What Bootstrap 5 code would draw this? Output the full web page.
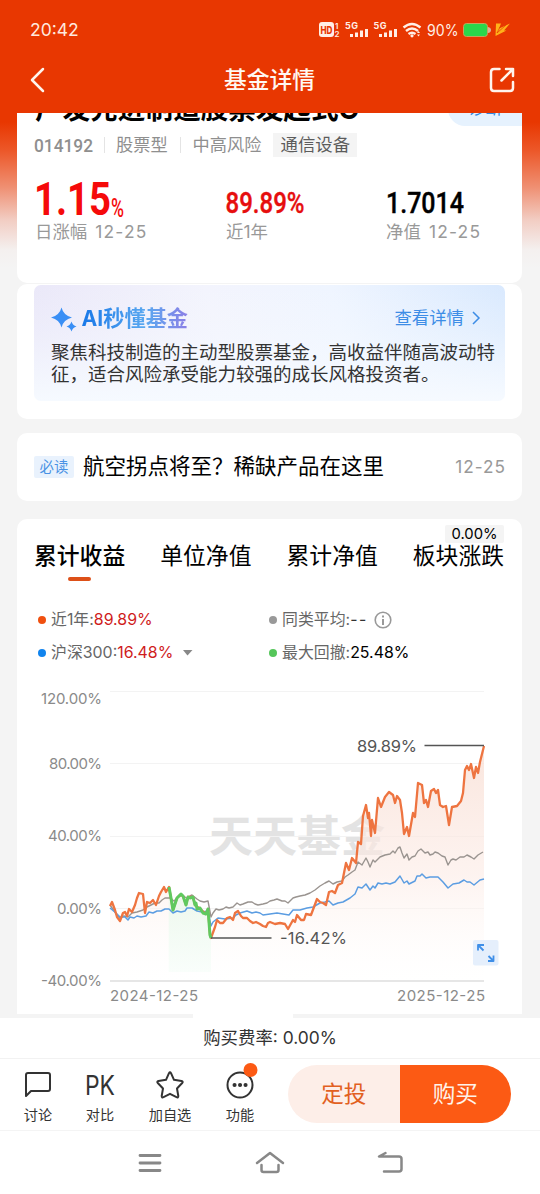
<!DOCTYPE html>
<html lang="zh-CN">
<head>
<meta charset="utf-8">
<meta name="viewport" content="width=device-width, initial-scale=1">
<title>基金详情</title>
<link href="https://cdn.jsdelivr.net/npm/bootstrap@5.3.0/dist/css/bootstrap.min.css" rel="stylesheet">
<style>
body{font-family:Inter,"Noto Sans CJK SC",sans-serif;width:540px;height:1194px;overflow:hidden;color:#000;line-height:1;
background:linear-gradient(#e83701 0,#e83701 122px,#ec5728 150px,#ef8f72 187px,#f2cdc3 220px,#f4f0ef 250px,#f4f4f4 268px)}
svg{display:block;flex:none;overflow:visible}
svg text{font-family:Inter,"Noto Sans CJK SC",sans-serif}
svg .din{font-family:Roboto,"Liberation Sans",sans-serif}
.status{height:60px;padding:0 30px;color:#ffe9df;font-size:17.5px}
.topnav{height:53px;padding:0 25px 13px 29px;color:#fff8f2}
.topnav h1{font-size:22.8px;font-weight:500;margin:0 0 0 5px}
.feed{height:905px;padding:0 18px 0 17px}
.panel{background:#fff;border-radius:10px}
.head{height:170px;border-radius:0 0 10px 10px;padding-left:18px}
.fname{font-size:27.6px;font-weight:700;height:32px;line-height:32px;margin-top:-20px;white-space:nowrap}
.diag{width:74px;height:34px;margin-top:-21px;border-radius:17px 0 0 17px;background:#e6f2fe;color:#2f86e0;font-size:17px;line-height:32px;padding-left:20px}
.meta{font-size:17.2px;color:#8f8f8f;margin-top:7px;height:24px}
.meta i{width:1px;height:16px;background:#e4e4e4;margin:0 11px 0 10px}
.meta i+span+i{margin:0 12px}
.tagbox{background:#f4f4f4;color:#5c5c5c;font-size:17.4px;height:24px;width:84px;margin-left:12px}
.sub{font-size:17.4px;color:#999}
.sub span{letter-spacing:1.2px;margin-left:2px}
.ai{height:135px;margin-top:1px;padding:1px 17px 0}
.aibox{height:116px;border-radius:7px;padding:20px 0 0 17px;background:linear-gradient(rgba(246,250,255,0) 0,rgba(246,250,255,.3) 40%,#f6faff 100%),linear-gradient(75deg,#e9e6f8 0,#f3f4fd 40%,#eff5ff 65%,#d9e9fe 100%)}
.aititle{font-size:21.2px;font-weight:700;background:linear-gradient(90deg,#1878e8,#5aa8f0 60%,#8c7fe6);-webkit-background-clip:text;background-clip:text;color:transparent;line-height:26px}
.aitext{font-size:18.5px;line-height:22px;color:#333;white-space:nowrap;margin-top:10px}
.more{color:#3d8de6;font-size:17.4px;margin-right:24px}
.news{height:68px;margin-top:14px;padding:0 17px}
.must{width:40px;height:22px;background:#e9f2fd;color:#4a92e4;font-size:14.4px;border-radius:2px}
.news b{font-weight:400;font-size:21.5px;margin-left:9px}
.news span{font-size:17.2px;color:#999;letter-spacing:1px;margin-right:-1px}
.perf{height:495px;margin-top:18px;border-radius:10px 10px 0 0;padding-top:25px}
.tabs{padding:0 18px 0 17px;font-size:22.8px;height:51px;line-height:24px}
.bar{width:23px;height:4px;border-radius:2px;background:#dd5018;margin:9px auto 0}
.tip{right:0;top:-19px;width:59px;height:18px;background:#f4f4f4;font-size:14.8px;line-height:18px;border-radius:2px}
.legend{padding-left:21px;padding-top:8px;font-size:15.9px;color:#666}
.legend>div{height:33px;width:231px}
.legend u{width:8px;height:8px;border-radius:50%;margin-right:5px}
.legend b{font-weight:400}
.red{color:#cf1c1c}
.fee{height:41px;background:#fff;border-bottom:1px solid #f2f2f2;font-size:17.4px;color:#333;position:relative}
.fee::before{content:"";position:absolute;left:193px;top:-5px;width:100px;height:6px;background:#fff}
.actions{height:72px;background:#fff;border-bottom:1px solid #f4f4f4;font-size:14.2px;color:#333;padding-left:5px}
.act{width:70px;padding-top:12px}
.act:first-child{width:66px}
.act:nth-child(2){width:58px;margin-right:6px}
.act svg{margin-bottom:9px}
.buy{width:223px;height:58px;border-radius:29px;margin:6px 0 0 13px;font-size:22.6px}
.buy div{background:#fdeee8;color:#e2601f}
.buy div+div{background:#fc5a14;color:#fff3e9}
.sys{height:63px;background:#fff;padding:0 137px 0 138px}
</style>
</head>
<body class="d-flex flex-column">
<header>
<div class="status d-flex align-items-center justify-content-between"><span>20:42</span>
<svg width="193" height="24" viewBox="317 18 193 24" fill="#ffeee6">
<rect x="319" y="22" width="15" height="15" rx="3"/><text x="320.5" y="33.5" font-size="10.5" font-weight="800" fill="#e83701" textLength="12" lengthAdjust="spacingAndGlyphs">HD</text>
<text x="335" y="28.5" font-size="8" font-weight="600">1</text><text x="334.500" y="36.500" font-size="8" font-weight="600">2</text>
<text x="345" y="28.500" font-size="9" font-weight="700" textLength="13">5G</text><text x="373.500" y="28.500" font-size="9" font-weight="700" textLength="13">5G</text>
<path d="M350 34h3v3h-3zM355 32.500h3v4.500h-3zM360 30.500h3v6.500h-3zM365 29h3v8h-3z"/><path d="M379 34h3v3h-3zM384 32.500h3v4.500h-3zM389 30.500h3v6.500h-3zM394 29h3v8h-3z"/>
<g fill="none" stroke="#ffeee6" stroke-width="2.400"><path d="M403.500 27.500q8.500-7 17 0M406 31q6-5 12 0M408.500 34q3.500-2.500 7 0"/></g><circle cx="412" cy="35.800" r="1.600"/><path d="M417 33l1.500-2 1.500 2zM417 34.500l1.500 2 1.500-2z"/>
<text x="427" y="36" font-size="15.500" textLength="31.500" lengthAdjust="spacingAndGlyphs">90%</text>
<rect x="463.500" y="23.500" width="24" height="13" rx="3" fill="#2bd74b" stroke="#c5a45c"/><path d="M488 27q3 .5 3 3t-3 3z" fill="#d9b39a"/>
<path d="M496 23.500h5l-2 5 11-5-6 7h2.500l-11 5.500z" fill="#ffb21a"/><path d="M500 27l-3 6 9-8" fill="none" stroke="#e83701" stroke-width=".7"/>
</svg></div>
<div class="topnav d-flex align-items-center justify-content-between">
<svg width="16" height="26" fill="none" stroke="#fff4ec" stroke-width="2.500" stroke-linecap="round" stroke-linejoin="round"><path d="M14 2L3 13l11 11"/></svg>
<h1>基金详情</h1>
<svg width="26" height="26" fill="none" stroke="#fff4ec" stroke-width="2.500" stroke-linecap="round" stroke-linejoin="round"><path d="M10.500 2H5Q2 2 2 5v16q0 3 3 3h16q3 0 3-3v-6M17 2h7v7M24 2L12.500 13.500"/></svg>
</div>
</header>
<main class="feed overflow-hidden">
<section class="panel head overflow-hidden">
<div class="d-flex justify-content-between"><div class="fname">广发先进制造股票发起式C</div><div class="diag">诊断</div></div>
<div class="meta d-flex align-items-center"><svg width="59" height="20"><text class="din" x="-1" y="16.500" font-size="18.500" font-weight="500" fill="#8f8f8f" textLength="59" lengthAdjust="spacingAndGlyphs">014192</text></svg><i></i><span>股票型</span><i></i><span>中高风险</span><span class="tagbox d-flex align-items-center justify-content-center">通信设备</span></div>
<div class="d-flex">
<div style="width:191px"><svg width="100" height="66" viewBox="35 156 100 66"><text class="din" x="34" y="214" font-size="46" font-weight="700" fill="#f50a0a" textLength="77" lengthAdjust="spacingAndGlyphs">1.15</text><text class="din" x="111" y="216" font-size="25" font-weight="500" fill="#f50a0a" textLength="13" lengthAdjust="spacingAndGlyphs">%</text></svg><div class="sub">日涨幅<span> 12-25</span></div></div>
<div style="width:160px"><svg width="100" height="66" viewBox="226 156 100 66"><text class="din" x="225.500" y="212" font-size="29" font-weight="500" stroke="#e60e0e" stroke-width=".4" fill="#e60e0e" textLength="79" lengthAdjust="spacingAndGlyphs">89.89%</text></svg><div class="sub">近1年</div></div>
<div><svg width="100" height="66" viewBox="386 156 100 66"><text class="din" x="386" y="212" font-size="29" font-weight="500" stroke="#000" stroke-width=".4" textLength="78" lengthAdjust="spacingAndGlyphs">1.7014</text></svg><div class="sub">净值<span> 12-25</span></div></div>
</div>
</section>
<section class="panel ai"><div class="aibox">
<div class="d-flex align-items-center"><svg width="30.500" height="26" fill="#3a8ff5"><path d="M10.500 2.500Q12.500 10.500 21 12.500 12.500 14.500 10.500 22.500 8.500 14.500 0 12.500 8.500 10.500 10.500 2.500zM20.500 16.500q1.200 3.800 5 5-3.800 1.200-5 5-1.200-3.800-5-5 3.800-1.200 5-5z"/></svg><span class="aititle">AI秒懂基金</span>
<span class="more ms-auto d-flex align-items-center">查看详情<svg class="ms-2" width="9" height="14" fill="none" stroke="#3d8de6" stroke-width="1.500"><path d="M1 1l6 6-6 6"/></svg></span></div>
<div class="aitext">聚焦科技制造的主动型股票基金，高收益伴随高波动特<br>征，适合风险承受能力较强的成长风格投资者。</div>
</div></section>
<section class="panel news d-flex align-items-center"><div class="must d-flex align-items-center justify-content-center">必读</div><b>航空拐点将至？稀缺产品在这里</b><span class="ms-auto">12-25</span></section>
<section class="panel perf">
<div class="tabs d-flex justify-content-between"><div class="fw-medium" style="font-weight:500">累计收益<div class="bar"></div></div><div>单位净值</div><div>累计净值</div><div class="position-relative">板块涨跌<div class="tip position-absolute text-center">0.00%</div></div></div>
<div class="legend d-flex flex-wrap">
<div class="d-flex align-items-center"><u style="background:#f0500f"></u>近1年:<b class="red">89.89%</b></div>
<div class="d-flex align-items-center"><u style="background:#999"></u>同类平均:<b style="color:#333;letter-spacing:1.500px">--</b><svg style="margin-left:6px" width="18" height="18" fill="none" stroke="#999" stroke-width="1.600"><circle cx="9" cy="9" r="7.800"/><path d="M9 8v6M9 4.500v2" stroke-width="2"/></svg></div>
<div class="d-flex align-items-center"><u style="background:#1184ee"></u>沪深300:<b class="red">16.48%</b><svg class="ms-2" width="12" height="8"><path d="M2 1h9.500L6.500 6.500z" fill="#888"/></svg></div>
<div class="d-flex align-items-center"><u style="background:#55c65a"></u>最大回撤:<b class="text-black">25.48%</b></div>
</div>
<svg width="505" height="330" viewBox="17 669 505 330" fill="none" stroke-linejoin="round">
<defs><linearGradient id="warm" x1="0" y1="746" x2="0" y2="980" gradientUnits="userSpaceOnUse"><stop stop-color="#f8ddd2" stop-opacity=".75"/><stop offset=".55" stop-color="#fcebe5" stop-opacity=".6"/><stop offset="1" stop-color="#fff" stop-opacity=".2"/></linearGradient>
<linearGradient id="mint" x1="0" y1="0" x2="0" y2="1"><stop stop-color="#e3f7e7" stop-opacity=".6"/><stop offset="1" stop-color="#f8fefa" stop-opacity=".8"/></linearGradient></defs>
<text x="209" y="852" font-size="43" font-weight="700" fill="#e3e3e3" textLength="176" lengthAdjust="spacingAndGlyphs">天天基金</text>
<path d="M110 691.500H484M110 763.500H484M110 836.500H484M110 908.500H484" stroke="#f3f3f3"/><path d="M110 981H484" stroke="#e6e6e6" stroke-width="2"/>
<path id="area" fill="url(#warm)"/><path d="M168.700 887L173 910 180 895 185 905 193 897 197 908 206 914 211 937V972H168.700z" fill="url(#mint)"/>
<polyline stroke="#9a9490" stroke-width="1.400" points="110,905 117,915 120,918 124,916 128,917 132,913 137,912 140,911 143,910 147,907 151,905 155,903 159,903 162,900 165,898 170,898 174,901 178,897 182,895 185,897 188,899 190,896 192,895 197,899 200,901 204,902 208,901 211,917 213,913 216,909 219,910 223,909 226,907 229,908 233,907 237,903 240,905 243,904 248,902 252,902 255,904 258,905 263,904 267,903 270,901 274,900 277,899 282,901 285,901 288,903 293,898 296,897 300,896 305,895 310,893 315,890 320,886 325,883 329,881 333,884 337,882 342,881 345,877 348,875 352,872 355,870 358,862 362,865 366,858 368,862 370,867 373,860 375,862 380,857 385,855 390,854 393,851 395,853 398,848 400,847 402,853 404,858 407,854 409,860 412,857 415,856 418,851 421,849 425,853 428,852 430,855 433,854 435,852 438,853 442,856 445,857 448,865 451,860 453,859 456,860 460,857 464,857 467,855 471,857 474,859 478,855 483,852"/>
<polyline stroke="#5b9de2" stroke-width="1.500" points="110,908 116,913 120,917 125,917 128,920 130,917 134,918 137,916 141,917 146,916 149,912 153,913 157,911 161,911 165,909 169,909 173,913 177,911 181,912 185,911 187,908 192,908 197,911 202,912 208,911 211,926 213,922 218,918 225,919 233,918 236,915 240,913 247,911 252,913 256,912 260,913 263,915 270,914 277,913 283,914 289,915 293,910 300,910 307,908 313,907 320,903 325,902 329,901 333,905 338,903 343,902 350,898 355,894 358,887 362,888 366,884 370,890 373,886 375,888 378,883 382,884 386,883 390,884 395,882 400,876 404,883 407,881 409,884 415,881 417,876 420,876 422,874 426,878 430,877 433,877 438,877 443,882 448,888 453,884 459,883 464,880 467,882 470,882 474,885 480,880 484,879"/>
<polyline id="fund" stroke="#ee7440" stroke-width="2.300" points="110,906 112,902 115,910 117,917 120,921 123,913 125,912 127,916 129,909 132,912 135,905 137,898 139,893 143,894 145,913 147,902 150,903 153,900 156,905 159,896 161,892 164,887 166,892 169,887 173,910 177,898 180,895 183,896 186,905 188,897 193,897 195,905 200,909 206,914 208,909 210,935 211,938 215,927 217,920 220,923 223,923 227,918 230,917 233,920 235,913 238,911 241,916 243,918 247,918 250,921 253,923 256,922 260,924 263,926 266,927 268,923 270,922 275,924 280,923 285,924 288,929 293,920 295,922 297,915 301,920 304,920 306,914 311,915 314,907 317,899 320,902 323,903 326,905 329,892 332,891 335,893 338,885 342,883 344,873 346,863 349,870 352,858 356,863 358,842 361,844 363,816 366,805 368,818 369,813 371,836 372,820 375,833 378,798 381,807 385,797 389,792 393,795 395,803 397,796 400,800 402,813 404,834 407,827 409,836 413,813 415,817 418,783 422,785 424,803 426,800 428,807 431,791 434,789 436,793 438,790 440,805 443,807 446,806 449,825 452,807 457,806 461,801 463,793 465,770 467,766 469,770 471,764 474,778 476,767 478,773 480,762 484,746"/>
<polyline stroke="#60c95f" stroke-width="3" points="169,887 171,898 173,910 177,898 179,896 181,894 183,896 186,905 188,897 190,898 193,897 195,905 196,903 197,909 200,908 203,913 206,914 208,909 210,935 211,938"/>
<path d="M211 938H271.500M424.500 745.500H484" stroke="#555" stroke-width="1.300"/>
<g fill="#8a8a8a" font-size="15"><text x="41" y="704" textLength="61">120.00%</text><text x="49" y="769" textLength="53">80.00%</text><text x="48" y="841" textLength="54">40.00%</text><text x="57" y="914" textLength="45">0.00%</text><text x="41" y="986" textLength="61">-40.00%</text><text x="110" y="1001" textLength="88">2024-12-25</text><text x="397" y="1001" textLength="88">2025-12-25</text></g>
<g fill="#555" font-size="16.500"><text x="357" y="751.500" textLength="60">89.89%</text><text x="280" y="944" textLength="67">-16.42%</text></g>
<rect x="473" y="940" width="25.500" height="25.500" rx="2" fill="#e5effc"/><path d="M478 950.500v-5.500h6M478 945l5.500 5.500M488 961h5.500v-5.500M493.500 961l-5-5" stroke="#3f8fe8" stroke-width="1.800"/>
</svg>
</section>
</main>
<div class="fee d-flex align-items-center justify-content-center">购买费率: 0.00%</div>
<nav class="actions d-flex">
<div class="act d-flex flex-column align-items-center"><svg width="28" height="28" fill="none" stroke="#333" stroke-width="2" stroke-linejoin="round"><path d="M4 2H24Q26 2 26 4V18q0 2-2 2H7L2 25V4Q2 2 4 2z"/></svg>讨论</div>
<div class="act d-flex flex-column align-items-center"><svg width="28" height="28"><text x="-1" y="24" font-size="26.500" fill="#333" textLength="30" lengthAdjust="spacingAndGlyphs">PK</text></svg>对比</div>
<div class="act d-flex flex-column align-items-center"><svg width="28" height="28" fill="none" stroke="#333" stroke-width="2" stroke-linejoin="round"><path d="M13 2.200Q14 .5 15 2.200L18 8.800 25.500 10Q27.500 10.500 26.200 12L21 17.500 22.300 25Q22.300 27 20.500 26.200L14 22.800 7.500 26.200Q5.700 27 5.700 25L7 17.500 1.800 12Q.5 10.500 2.500 10L10 8.800z"/></svg>加自选</div>
<div class="act d-flex flex-column align-items-center"><svg width="28" height="28"><circle cx="14" cy="14" r="12.500" fill="none" stroke="#333" stroke-width="2"/><path d="M8.500 14h.1M14 14h.1M19.500 14h.1" stroke="#333" stroke-width="4" stroke-linecap="round"/><circle cx="24.500" cy="-1" r="7" fill="#fc5a14"/></svg>功能</div>
<div class="buy d-flex overflow-hidden"><div class="w-50 d-flex align-items-center justify-content-center">定投</div><div class="w-50 d-flex align-items-center justify-content-center">购买</div></div>
</nav>
<footer class="sys d-flex align-items-center justify-content-between">
<svg width="24" height="20" stroke="#888" stroke-width="2.800" stroke-linecap="round"><path d="M2 2.500h20M2 10h20M2 17.500h20"/></svg>
<svg width="30" height="24" fill="none" stroke="#888" stroke-width="2.500" stroke-linecap="round" stroke-linejoin="round"><path d="M2 12L15 2 28 12M6.500 14v5q0 2 2 2h13q2 0 2-2v-5"/></svg>
<svg width="26" height="24" fill="none" stroke="#888" stroke-width="2.500" stroke-linecap="round" stroke-linejoin="round"><path d="M8.500 2L2 5.500H22q2.500 0 2.500 2.500V18q0 2.500-2.500 2.500H7"/></svg>
</footer>
<script>
const line = document.getElementById('fund').getAttribute('points');
document.getElementById('area').setAttribute('d', 'M110 980L' + line + 'V980z');
</script>
<script src="https://cdn.jsdelivr.net/npm/bootstrap@5.3.0/dist/js/bootstrap.bundle.min.js"></script>
</body>
</html>
